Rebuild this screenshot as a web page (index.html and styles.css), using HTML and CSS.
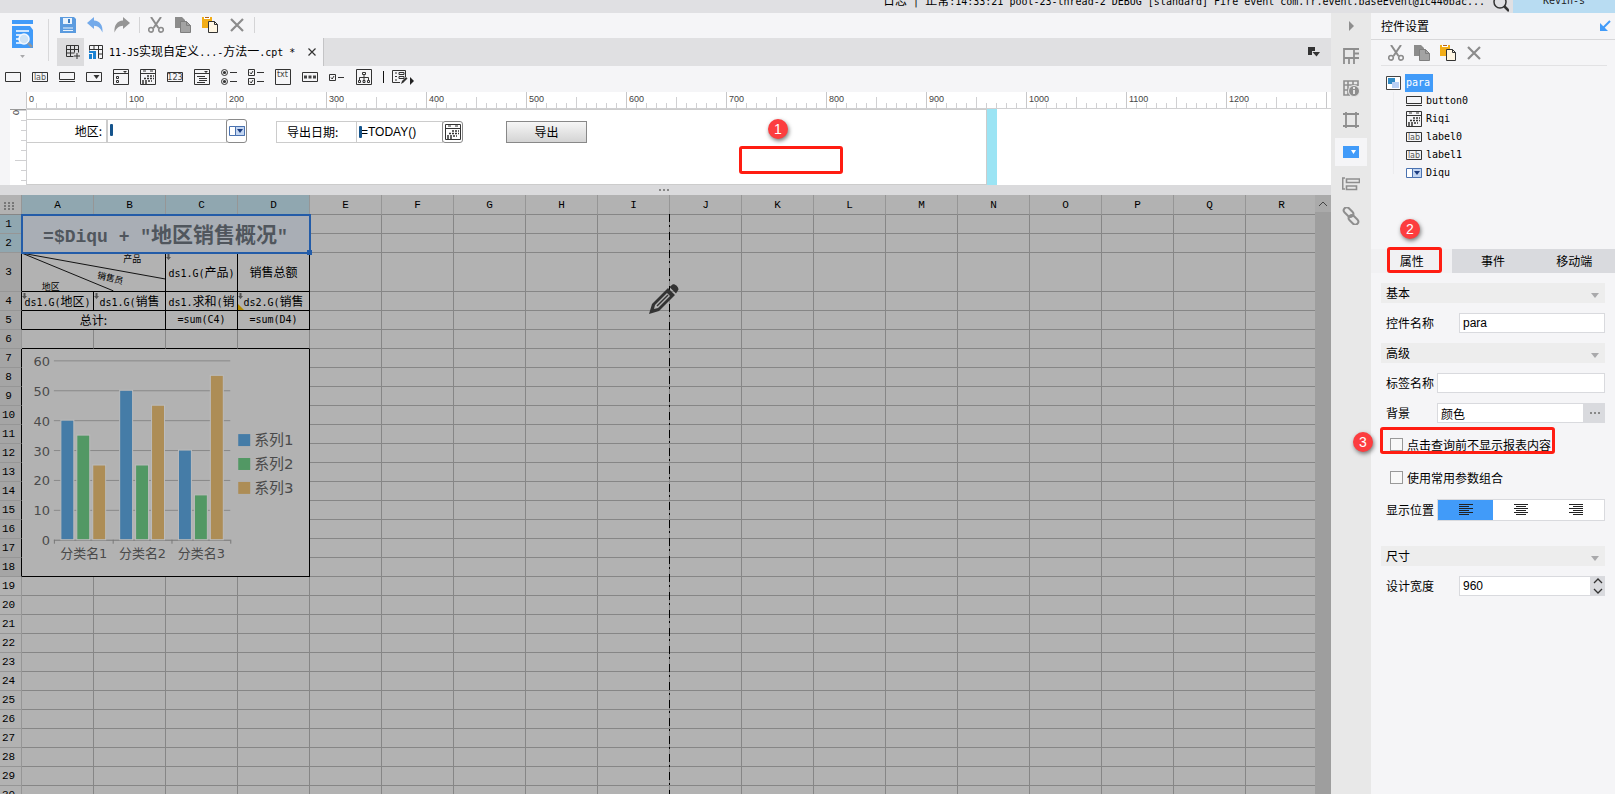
FILE: index.html
```html
<!DOCTYPE html>
<html lang="zh-CN">
<head>
	<meta charset="utf-8">
	<meta name="viewport" content="width=device-width, initial-scale=1">
	<title>Report Designer</title>
	<link rel="stylesheet" href="styles.css">
</head>
<body>
	<!-- shared icons -->
	<svg class="defs" aria-hidden="true">
		<symbol id="i-cut" viewBox="0 0 16 16"><g fill="none" stroke="#8c8c8c" stroke-width="2"><path d="M3 0l7.500 11M13 0L5.500 11"/><circle cx="3" cy="12.800" r="2.300" stroke-width="1.600"/><circle cx="13" cy="12.800" r="2.300" stroke-width="1.600"/></g></symbol>
		<symbol id="i-copy" viewBox="0 0 16 16"><path d="M0 0h7l3 3v8H0z" fill="#8c8c8c"/><path d="M5.500 4.500h6l4 4v7h-10z" fill="#a3a3a3" stroke="#7f7f7f"/><path d="M11.500 4.500v4h4" fill="none" stroke="#7f7f7f"/></symbol>
		<symbol id="i-paste" viewBox="0 0 16 16"><path d="M0 0h10v11H0z" fill="#f2ad17"/><path d="M2 0h6v2H2z" fill="#fff"/><path d="M3 0h4v1H3z" fill="#b5651d"/><path d="M6.500 4.500h6l3 3v8h-9z" fill="#fff6e3" stroke="#333"/><path d="M12.500 4.500v3h3" fill="none" stroke="#333"/></symbol>
		<symbol id="i-del" viewBox="0 0 16 16"><path d="M2 2l12 12M14 2L2 14" stroke="#8c8c8c" stroke-width="2.200"/></symbol>
		<symbol id="i-button" viewBox="0 0 16 16"><path d="M.5 3.500h15v7H.5zM0 12.500h16" fill="none" stroke="#333"/></symbol>
		<symbol id="i-label" viewBox="0 0 16 16"><path d="M.5 3.500h15v9H.5z" fill="none" stroke="#333"/><text x="8" y="11" font-size="8" text-anchor="middle" fill="#555" font-family="DejaVu Sans">lab</text></symbol>
		<symbol id="i-date" viewBox="0 0 16 16"><path d="M.5.5h15v15H.5zM.5 4.500h15" fill="none" stroke="#333"/><path d="M3 2h3M10 2h3" stroke="#333"/><path d="M7 7h7M4 9.500h10M2 12h10M2 14h5" stroke="#333" stroke-width="1.500" stroke-dasharray="2 1"/></symbol>
		<symbol id="i-combo" viewBox="0 0 16 16"><path d="M.5 3.500h15v9H.5z" fill="#fff" stroke="#4a72b0"/><path d="M6.500 3.500h9v9h-9z" fill="#c3d6f2" stroke="#4a72b0"/><path d="M8 6h6l-3 4z" fill="#1d3d80"/></symbol>
		<symbol id="i-caret" viewBox="0 0 8 5"><path d="M0 0h8L4 5z" fill="#a9a9ab"/></symbol>
	</svg>

	<header class="topbar">
		<p class="log">日志<span class="mono bar"> | </span>正常<span class="mono">:14:33:21 pool-23-thread-2 DEBUG [standard] Fire event com.fr.event.baseEvent@1c440bac...</span></p>
		<button class="icon-btn search" aria-label="搜索"><svg viewBox="0 0 16 16"><g fill="none" stroke="#333"><circle cx="7" cy="2" r="6" stroke-width="1.500"/><path d="M11 6l5 5" stroke-width="2.500"/></g></svg></button>
		<a class="user mono" href="#">Kevin-s</a>
	</header>

	<div class="workspace">
		<main class="designer">
			<div class="tools">
				<button class="preview" aria-label="预览">
					<svg class="preview-icon" viewBox="0 0 22 28"><path d="M0 0h21v4H0zM0 6h18l3 4v18H0V6z" fill="#419bf9"/><path d="M4 11h13M4 15h5M4 19h4M4 23h6" stroke="#fff" stroke-width="1.500"/><circle cx="12" cy="19" r="5" fill="#cfe3f5" stroke="#f3f8ff" stroke-width="1.500"/><path d="M16 23l4 4" stroke="#90979f" stroke-width="2.500"/></svg>
					<svg class="caret"><use href="#i-caret"/></svg>
				</button>
				<div class="bars">
					<div class="quickbar">
						<button class="icon-btn" aria-label="保存"><svg viewBox="0 0 16 16"><path d="M0 0h14l2 2v14H0z" fill="#5b9bdf"/><path d="M3 1h9v6H3z" fill="#eaf3fc"/><path d="M8 2h2v4H8z" fill="#3d7cc0"/><path d="M3 11h10M3 13.500h10" stroke="#eaf3fc" stroke-width="1.200"/></svg></button>
						<button class="icon-btn" aria-label="撤销"><svg viewBox="0 0 16 16"><path d="M0 6l7-6v3.500c6 .5 9 4.500 8.500 12C13.500 11 11 9 7 8.800V12z" fill="#74aaea"/></svg></button>
						<button class="icon-btn" aria-label="重做"><svg viewBox="0 0 16 16"><path d="M16 6L9 0v3.500C3 4 0 8 .5 15.500 2.500 11 5 9 9 8.800V12z" fill="#959595"/></svg></button>
						<span class="sep"></span>
						<button class="icon-btn" aria-label="剪切"><svg><use href="#i-cut"/></svg></button>
						<button class="icon-btn" aria-label="复制"><svg><use href="#i-copy"/></svg></button>
						<button class="icon-btn" aria-label="粘贴"><svg><use href="#i-paste"/></svg></button>
						<button class="icon-btn" aria-label="删除"><svg><use href="#i-del"/></svg></button>
						<span class="sep"></span>
					</div>
					<div class="tabs">
						<button class="new-tab" aria-label="新建"><svg viewBox="0 0 14 14"><path d="M.5.5h12v7M.5.5v11h7M.5 4.500h12M.5 8h8M4.500.5v11M8.500.5v7M11 8v6M8 11h6" fill="none" stroke="#333"/></svg></button>
						<div class="file-tab">
							<svg class="file-icon" viewBox="0 0 14 14"><path d="M.5.5h13v13h-3M.5.5v5M.5 4.500h13M5 .5v4M9.500.5v13M9.500 9h4" fill="none" stroke="#333"/><path d="M0 6h7v2H0zM0 9h3v5H0zM4 7h3v7H4z" fill="#1b82d2"/></svg>
							<span><span class="mono">11-JS</span>实现自定义<span class="mono">...-</span>方法一<span class="mono">.cpt *</span></span>
							<button class="tab-close" aria-label="关闭"><svg viewBox="0 0 8 8"><path d="M.5.5l7 7M7.500.5l-7 7" stroke="#333" stroke-width="1.200"/></svg></button>
						</div>
						<button class="tab-list" aria-label="文件列表"><svg viewBox="0 0 12 10"><path d="M0 0h7v4H4v4H0z" fill="#333"/><path d="M4.500 5H12L8.500 9.500z" fill="#333"/></svg></button>
					</div>
				</div>
			</div>

			<div class="widgets">
				<button class="icon-btn" aria-label="文本"><svg viewBox="0 0 16 16"><path d="M.5 3.500h15v9H.5z" fill="none" stroke="#333"/></svg></button>
				<button class="icon-btn" aria-label="标签"><svg><use href="#i-label"/></svg></button>
				<button class="icon-btn" aria-label="按钮"><svg><use href="#i-button"/></svg></button>
				<button class="icon-btn" aria-label="下拉框"><svg viewBox="0 0 16 16"><path d="M.5 3.500h15v9H.5z" fill="none" stroke="#333"/><path d="M7.500 6h6l-3 4z" fill="#333"/></svg></button>
				<button class="icon-btn" aria-label="下拉复选框"><svg viewBox="0 0 16 16"><path d="M.5.5h15v15H.5zM.5 4.500h15M3.500 7.500h2v2h-2zM3.500 11.500h2v2h-2z" fill="none" stroke="#333"/><path d="M10 2h4l-2 2z" fill="#333"/></svg></button>
				<button class="icon-btn" aria-label="日期"><svg><use href="#i-date"/></svg></button>
				<button class="icon-btn" aria-label="数字"><svg viewBox="0 0 16 16"><path d="M.5 3.500h15v9H.5z" fill="none" stroke="#333"/><text x="8" y="11" font-size="8" text-anchor="middle" fill="#444" font-family="DejaVu Sans">123</text></svg></button>
				<button class="icon-btn" aria-label="下拉树"><svg viewBox="0 0 16 16"><path d="M.5.5h15v15H.5zM.5 4.500h15M3 7.500h8M5 9.500h8M5 11.500h8M3 13.500h8" fill="none" stroke="#333"/><path d="M10 2h4l-2 2z" fill="#333"/></svg></button>
				<button class="icon-btn" aria-label="单选按钮组"><svg viewBox="0 0 16 16"><g fill="none" stroke="#333"><circle cx="3.500" cy="3.500" r="3"/><circle cx="3.500" cy="12.500" r="3"/><path d="M9 3.500h7M9 12.500h7"/></g><circle cx="3.500" cy="3.500" r="1.600" fill="#333"/><circle cx="3.500" cy="12.500" r="1.600" fill="#333"/></svg></button>
				<button class="icon-btn" aria-label="复选框组"><svg viewBox="0 0 16 16"><path d="M.5.5h6v6h-6zM.5 9.500h6v6h-6zM9 3.500h7M9 12.500h7M2 3.500l1.200 1.500L5 2M2 12.500L3.200 14 5 11" fill="none" stroke="#333"/></svg></button>
				<button class="icon-btn" aria-label="文本域"><svg viewBox="0 0 16 16"><path d="M.5.5h15v15H.5z" fill="none" stroke="#333"/><text x="7.500" y="7.500" font-size="8" text-anchor="middle" fill="#444" font-family="DejaVu Sans">txt</text></svg></button>
				<button class="icon-btn" aria-label="密码"><svg viewBox="0 0 16 16"><path d="M.5 3.500h15v9H.5z" fill="none" stroke="#333"/><path d="M2 8h12" stroke="#444" stroke-width="3" stroke-dasharray="3 1.500"/></svg></button>
				<button class="icon-btn" aria-label="复选框"><svg viewBox="0 0 16 16"><path d="M.5 5.500h6v6h-6zM9 8.500h6M2 8.500L3.200 10 5 7" fill="none" stroke="#333"/></svg></button>
				<button class="icon-btn" aria-label="视图树"><svg viewBox="0 0 16 16"><path d="M.5.5h15v15H.5zM6.500 3.500h3v2h-3zM8 6v5M3.500 11V8.500h9V11M2.500 11.500h2v2h-2zM7 11.500h2v2H7zM11.500 11.500h2v2h-2z" fill="none" stroke="#333"/></svg></button>
				<span class="widget-sep"></span>
				<button class="icon-btn more" aria-label="预定义控件"><svg viewBox="0 0 18 16"><path d="M8 13.500H.5V1.500h13V8M3 4h2M3 7.500h2M3 11h2M7 3.500h5v2H7zM7 7.500h5v2H7z" fill="none" stroke="#333"/><path d="M9 15l1-3 4-4 1.500 1.500-4 4z" fill="#333"/></svg><svg class="more-arrow" viewBox="0 0 4 8"><path d="M0 0l4 4-4 4z" fill="#222"/></svg></button>
			</div>

			<section class="form-area">
				<div class="ruler-h" id="rulerH"></div>
				<div class="ruler-v"><span>0</span></div>
				<div class="form-canvas">
					<div class="form-body">
						<label class="w-box w-label0" for="diqu">地区:</label>
						<div class="w-field w-diqu"><input id="diqu" type="text"><i class="cursor"></i></div>
						<button class="w-drop w-diqu-btn" aria-label="展开"><svg><use href="#i-combo"/></svg></button>
						<label class="w-box w-label1" for="riqi">导出日期:</label>
						<div class="w-field w-riqi"><input id="riqi" type="text" value="=TODAY()"><i class="cursor"></i></div>
						<button class="w-drop w-riqi-btn" aria-label="选择日期"><svg><use href="#i-date"/></svg></button>
						<button class="w-export">导出</button>
						<span class="badge badge-1">1</span>
						<span class="mark mark-1"></span>
					</div>
					<div class="form-edge"></div>
				</div>
			</section>

			<div class="splitter"><i></i><i></i><i></i></div>

			<section class="sheet">
				<div class="sheet-view">
					<table id="grid">
						<colgroup id="cols"><col class="col-head"></colgroup>
						<thead>
							<tr id="letters"><th class="corner"><svg viewBox="0 0 10 8"><path d="M0 1h10M0 4h10M0 7h10" stroke="#777" stroke-width="2" stroke-dasharray="2 2"/></svg></th></tr>
						</thead>
						<tbody id="rows">
							<tr><th class="on">1</th><td class="title-cell" colspan="4" rowspan="2"><div><span class="title-mono">=$Diqu + "</span>地区销售概况<span class="title-mono">"</span></div></td></tr>
							<tr><th class="on">2</th></tr>
							<tr class="tall"><th class="used edge">3</th>
								<td class="b diag" colspan="2"><svg viewBox="0 0 144 38"><path d="M0 0l144 26M0 0l92 38" stroke="#111" fill="none"/><text x="102" y="9">产品</text><text x="75" y="25" transform="rotate(14 75 25)">销售员</text><text x="20" y="37">地区</text></svg></td>
								<td class="b exp"><div><span class="mono">ds1.G(</span>产品<span class="mono">)</span></div></td>
								<td class="b"><div>销售总额</div></td>
							</tr>
							<tr><th class="used edge">4</th>
								<td class="b exp"><div><span class="mono">ds1.G(</span>地区<span class="mono">)</span></div></td>
								<td class="b exp"><div><span class="mono">ds1.G(</span>销售<br>员<span class="mono">)</span></div></td>
								<td class="b"><div><span class="mono">ds1.</span>求和<span class="mono">(</span>销<br>量<span class="mono">)</span></div></td>
								<td class="b exp warn"><div><span class="mono">ds2.G(</span>销售<br>总额<span class="mono">)</span></div></td>
							</tr>
							<tr><th class="used edge">5</th>
								<td class="b" colspan="2"><div>总计:</div></td>
								<td class="b"><div class="mono">=sum(C4)</div></td>
								<td class="b"><div class="mono">=sum(D4)</div></td>
							</tr>
							<tr class="gap"><th class="used">6</th><td></td><td></td><td></td><td></td></tr>
							<tr><th class="used edge">7</th><td class="b chart-cell" colspan="4" rowspan="12">
								<svg class="chart" id="chart" viewBox="0 0 288 227" role="img" aria-label="柱形图"></svg>
							</td></tr>
						</tbody>
					</table>
					<div class="selection"></div>
					<div class="page-break"></div>
					<svg class="pencil" viewBox="0 0 30 30"><path d="M0 30l3-10L19 4l7 7L10 27zM20.500 3l3-2.500c2-1 6 2 6 5L27 9.500z" fill="#333"/><path d="M6 21L18 9l3 3L9 24l-4 1z" fill="#b2b2b2"/><path d="M8 22L19 11" stroke="#333" stroke-width="1.500"/></svg>
				</div>
				<div class="scrollbar"><button aria-label="向上滚动"><svg viewBox="0 0 10 6"><path d="M1 5l4-4 4 4" fill="none" stroke="#444"/></svg></button></div>
			</section>
		</main>

		<nav class="rail">
			<button aria-label="收起"><svg viewBox="0 0 18 18"><path d="M7 4l5 5-5 5z" fill="#8e8e8e"/></svg></button>
			<button aria-label="单元格元素"><svg viewBox="0 0 18 18"><path d="M2 2h10v9H2zM2 1v16M12 2h5M12 6.500h5M12 11h5M7 11v6M12 11v6" fill="none" stroke="#8e8e8e" stroke-width="1.800"/></svg></button>
			<button aria-label="单元格属性"><svg viewBox="0 0 18 18"><path d="M8 16H2V2h14v5M2 6h14M2 11h6M6 2v14M11 2v4" fill="none" stroke="#8e8e8e" stroke-width="1.600"/><circle cx="12" cy="12" r="5.500" fill="#8e8e8e" stroke="#e8e8e8"/><path d="M12 11v4M12 8v2" stroke="#eee" stroke-width="1.800"/></svg></button>
			<button aria-label="悬浮元素"><svg viewBox="0 0 18 18"><path d="M4 1v16M14 1v16M1 3h16M1 15h16" stroke="#8e8e8e" stroke-width="1.800"/></svg></button>
			<button class="active" aria-label="控件设置"><svg viewBox="0 0 18 18"><path d="M1 3h16v12H1z" fill="#419bf9"/><path d="M9 7h5l-2.500 4z" fill="#fff"/></svg></button>
			<button aria-label="条件属性"><svg viewBox="0 0 18 18"><path d="M3 3H.7v11H3M4.500 4h13v3.500h-13zM4.500 11h10v3.500h-10z" fill="none" stroke="#8e8e8e" stroke-width="1.600"/></svg></button>
			<button aria-label="超级链接"><svg viewBox="0 0 18 18"><g fill="none" stroke="#8e8e8e" stroke-width="2" transform="rotate(45 9 9)"><rect x="-1" y="5" width="11" height="6" rx="3"/><rect x="8" y="7" width="11" height="6" rx="3"/></g></svg></button>
		</nav>

		<aside class="panel">
			<div class="panel-head"><h1>控件设置</h1><button class="icon-btn dock" aria-label="弹出"><svg viewBox="0 0 12 12"><path d="M11 1L4 8" stroke="#419bf9" stroke-width="2"/><path d="M1 3v8h8z" fill="#419bf9"/></svg></button></div>
			<div class="panel-tools">
				<button class="icon-btn" aria-label="剪切"><svg><use href="#i-cut"/></svg></button>
				<button class="icon-btn" aria-label="复制"><svg><use href="#i-copy"/></svg></button>
				<button class="icon-btn" aria-label="粘贴"><svg><use href="#i-paste"/></svg></button>
				<button class="icon-btn" aria-label="删除"><svg><use href="#i-del"/></svg></button>
			</div>
			<div class="tree mono">
				<div class="tree-root"><svg viewBox="0 0 16 16"><path d="M.5 1.500h14v13H.5z" fill="#fff" stroke="#444"/><path d="M2 3h7v6H2z" fill="#2f8ac4"/><path d="M6 7h7v6H6z" fill="#b9d0f5"/></svg><span>para</span></div>
				<ul>
					<li><svg><use href="#i-button"/></svg>button0</li>
					<li><svg><use href="#i-date"/></svg>Riqi</li>
					<li><svg><use href="#i-label"/></svg>label0</li>
					<li><svg><use href="#i-label"/></svg>label1</li>
					<li><svg><use href="#i-combo"/></svg>Diqu</li>
				</ul>
				<span class="badge badge-2">2</span>
			</div>
			<div class="panel-tabs">
				<button class="active">属性</button>
				<button>事件</button>
				<button>移动端</button>
				<span class="mark mark-2"></span>
			</div>
			<form class="props">
				<h2>基本<svg class="caret"><use href="#i-caret"/></svg></h2>
				<div class="row"><label class="wide" for="pName">控件名称</label><input id="pName" type="text" value="para"></div>
				<h2>高级<svg class="caret"><use href="#i-caret"/></svg></h2>
				<div class="row"><label for="pTag">标签名称</label><input id="pTag" type="text"></div>
				<div class="row"><label for="pBg">背景</label><input id="pBg" class="cjk" type="text" value="颜色"><button type="button" class="dots" aria-label="选择背景"><i></i><i></i><i></i></button></div>
				<div class="row check"><input id="pHide" type="checkbox"><label for="pHide">点击查询前不显示报表内容</label><span class="badge badge-3">3</span><span class="mark mark-3"></span></div>
				<div class="row check"><input id="pUse" type="checkbox"><label for="pUse">使用常用参数组合</label></div>
				<div class="row last"><label>显示位置</label>
					<div class="segment">
						<button type="button" class="active" aria-label="左"><svg viewBox="0 0 14 12"><path d="M0 .5h14M0 2.500h10M0 4.500h14M0 6.500h10M0 8.500h14M0 10.500h10" stroke="#222"/></svg></button>
						<button type="button" aria-label="中"><svg viewBox="0 0 14 12"><path d="M0 .5h14M2 2.500h10M0 4.500h14M2 6.500h10M0 8.500h14M2 10.500h10" stroke="#222"/></svg></button>
						<button type="button" aria-label="右"><svg viewBox="0 0 14 12"><path d="M0 .5h14M4 2.500h10M0 4.500h14M4 6.500h10M0 8.500h14M4 10.500h10" stroke="#222"/></svg></button>
					</div>
				</div>
				<h2>尺寸<svg class="caret"><use href="#i-caret"/></svg></h2>
				<div class="row"><label class="wide" for="pWidth">设计宽度</label><input id="pWidth" type="text" value="960">
					<div class="spin">
						<button type="button" aria-label="增加"><svg viewBox="0 0 10 6"><path d="M1 5l4-4 4 4" fill="none" stroke="#333" stroke-width="1.300"/></svg></button>
						<button type="button" aria-label="减少"><svg viewBox="0 0 10 6"><path d="M1 1l4 4 4-4" fill="none" stroke="#333" stroke-width="1.300"/></svg></button>
					</div>
				</div>
			</form>
		</aside>
	</div>

	<script>
		const COLS = 18;
		const ROWS = 30;

		// ruler numbers, one every 100 units
		const ruler = document.getElementById('rulerH');
		for (let n = 0; n <= 1200; n += 100) {
			ruler.insertAdjacentHTML('beforeend', `<span>${n}</span>`);
		}

		// column letters
		const cols = document.getElementById('cols');
		const letters = document.getElementById('letters');
		for (let c = 0; c < COLS; c++) {
			cols.insertAdjacentHTML('beforeend', '<col class="col">');
			letters.insertAdjacentHTML('beforeend', `<th class="${c < 4 ? 'on' : ''}">${String.fromCharCode(65 + c)}</th>`);
		}

		// fill the rest of the grid with empty cells
		const tbody = document.getElementById('rows');
		for (let r = 1; r <= ROWS; r++) {
			let row = tbody.rows[r - 1];
			if (!row) {
				row = tbody.insertRow(-1);
				row.innerHTML = `<th class="${r <= 18 ? 'used edge' : ''}">${r}</th>`;
			}
			const empty = r <= 18 ? COLS - 4 : COLS;
			for (let c = 0; c < empty; c++) {
				row.insertCell(-1);
			}
		}

		// bar chart
		const series = [
			{ name: '系列1', color: '#457ca7', data: [40, 50, 30] },
			{ name: '系列2', color: '#529864', data: [35, 25, 15] },
			{ name: '系列3', color: '#ad8d56', data: [25, 45, 55] }
		];
		const left = 32, right = 209, bottom = 191, step = 59;
		let out = '';
		for (let v = 0; v <= 60; v += 10) {
			const y = bottom - v * 3 + 0.5;
			out += `<path d="M${left} ${y}H${right}" stroke="${v ? '#8a8a8a' : '#777'}"/>`;
			out += `<text x="28" y="${y + 5}" text-anchor="end">${v}</text>`;
		}
		for (let c = 0; c < 3; c++) {
			const x = left + c * step;
			series.forEach((s, i) => {
				const h = s.data[c] * 3;
				out += `<rect x="${x + 7 + i * 16}" y="${bottom - h}" width="13" height="${h}" fill="${s.color}" stroke="#bcbcbc"/>`;
			});
			out += `<text x="${x + 30}" y="209" text-anchor="middle">分类名${c + 1}</text>`;
		}
		for (let c = 0; c <= 3; c++) {
			out += `<path d="M${left + c * step + 0.5} ${bottom}v4" stroke="#777"/>`;
		}
		series.forEach((s, i) => {
			const y = 85 + i * 24;
			out += `<rect x="217" y="${y}" width="12" height="12" fill="${s.color}"/>`;
			out += `<text class="legend" x="233" y="${y + 11}">${s.name}</text>`;
		});
		document.getElementById('chart').innerHTML = out;
	</script>
</body>
</html>
```

FILE: styles.css
```css
* {
    box-sizing: border-box;
}
body {
    margin: 0;
    height: 100vh;
    display: flex;
    flex-direction: column;
    overflow: hidden;
    background: #f5f5f7;
    color: #000;
    font-family: "Noto Sans CJK SC", sans-serif;
    font-size: 12px;
    line-height: 16px;
}
button, input {
    font: inherit;
    color: inherit;
    margin: 0;
    padding: 0;
    border: 0;
    background: none;
}
svg {
    display: block;
}
.defs {
    display: none;
}
.mono {
    font-family: "DejaVu Sans Mono", "Liberation Mono", monospace;
    font-size: 10px;
}
.icon-btn {
    flex: none;
    width: 16px;
    height: 16px;
}
.icon-btn svg {
    width: 16px;
    height: 16px;
}
.caret {
    width: 8px;
    height: 5px;
}

/* top bar */
.topbar {
    flex: none;
    display: flex;
    justify-content: flex-end;
    align-items: flex-end;
    height: 13px;
    overflow: hidden;
    background: #e0e0e3;
}
.log {
    margin: 0;
    padding-bottom: 3px;
    white-space: nowrap;
}
.bar {
    white-space: pre;
}
.search {
    margin: 0 4px 0 8px;
    height: 13px;
}
.user {
    width: 102px;
    height: 20px;
    padding-bottom: 4px;
    background: #b8dcf2;
    color: #222;
    text-align: center;
    text-decoration: none;
}

.workspace {
    flex: 1;
    display: flex;
    min-height: 0;
}
.designer {
    flex: 1;
    display: flex;
    flex-direction: column;
    min-width: 0;
}

/* toolbars */
.tools {
    flex: none;
    display: flex;
    height: 53px;
}
.preview {
    display: flex;
    flex-direction: column;
    align-items: center;
    justify-content: flex-start;
    gap: 7px;
    width: 37px;
    height: 42px;
    margin: 6px 0 0 12px;
    padding: 1px 15px 0 0;
    border-right: 1px solid #d8d8da;
}
.preview-icon {
    width: 22px;
    height: 28px;
}
.preview .caret {
    width: 5px;
    height: 3px;
}
.bars {
    flex: 1;
    min-width: 0;
    margin-left: 8px;
}
.quickbar {
    display: flex;
    align-items: center;
    gap: 11px;
    height: 25px;
    padding: 0 0 2px 3px;
}
.sep {
    width: 1px;
    height: 16px;
    background: #d4d4d6;
    margin: 0 -3px 0 -2px;
}
.tabs {
    display: flex;
    height: 28px;
    background: #e0e0e2;
}
.new-tab {
    width: 27px;
    padding-left: 9px;
    background: #dcdcde;
}
.new-tab svg, .file-icon {
    width: 14px;
    height: 14px;
}
.file-tab {
    display: flex;
    align-items: center;
    width: 240px;
    padding: 0 7px 0 5px;
    gap: 6px;
    background: #f5f5f7;
    border-right: 1px solid #c4c4c6;
    white-space: nowrap;
}
.tab-close {
    margin-left: auto;
}
.tab-close svg {
    width: 8px;
    height: 8px;
}
.tab-list {
    margin: 0 11px 0 auto;
}
.tab-list svg {
    width: 12px;
    height: 10px;
}
.widgets {
    flex: none;
    display: flex;
    align-items: center;
    gap: 11px;
    height: 26px;
    padding: 0 0 4px 5px;
}
.widget-sep {
    width: 1px;
    height: 12px;
    background: #111;
}
.more {
    display: flex;
    align-items: flex-end;
    width: 24px;
    margin-left: -3px;
}
.more svg {
    flex: none;
    width: 18px;
}
.more .more-arrow {
    width: 4px;
    height: 8px;
}

/* parameter form */
.form-area {
    flex: none;
    display: grid;
    grid-template-columns: 26px 1fr;
    grid-template-rows: 17px 76px;
}
.ruler-h {
    grid-column: 2;
    display: flex;
    overflow: hidden;
    border-bottom: 1px solid #d0d0d2;
    background:
        repeating-linear-gradient(90deg, #c8c8ca 0 1px, transparent 1px 100px) 0 0 / 100% 16px no-repeat,
        repeating-linear-gradient(90deg, #d0d0d2 0 1px, transparent 1px 50px) 0 100% / 100% 11px no-repeat,
        repeating-linear-gradient(90deg, #d0d0d2 0 1px, transparent 1px 10px) 0 100% / 100% 5px no-repeat,
        #fff;
}
.ruler-h span {
    flex: none;
    width: 100px;
    padding-left: 3px;
    color: #444;
    font: 9px/14px "Liberation Sans", sans-serif;
}
.ruler-v {
    margin-left: 10px;
    padding: 0 0 0 1px;
    border-top: 1px solid #999;
    background:
        repeating-linear-gradient(#d0d0d2 0 1px, transparent 1px 50px) 100% 0 / 11px 100% no-repeat,
        repeating-linear-gradient(#d0d0d2 0 1px, transparent 1px 10px) 100% 0 / 5px 100% no-repeat,
        #fff;
}
.ruler-v span {
    display: block;
    writing-mode: vertical-rl;
    color: #444;
    font: 9px/10px "Liberation Sans", sans-serif;
}
.form-canvas {
    display: flex;
    background: #fff;
    border-left: 1px solid #d0d0d2;
}
.form-body {
    position: relative;
    width: 960px;
    border: solid #ccc;
    border-width: 1px 1px 1px 0;
}
.form-edge {
    width: 10px;
    background: #9be4f4;
}
/* widgets sit freely on the canvas */
.w-box, .w-field, .w-drop, .w-export {
    position: absolute;
    border: 1px solid #ccc;
}
.w-box {
    line-height: 20px;
    white-space: nowrap;
}
.w-field input {
    display: block;
    width: 100%;
    height: 100%;
    padding-left: 4px;
    font-family: "Liberation Sans", sans-serif;
    outline: 0;
}
.cursor {
    position: absolute;
    left: 2px;
    top: 4px;
    width: 3px;
    height: 12px;
    border-radius: 1px;
    background: #15548c;
}
.w-drop {
    width: 21px;
    border-color: #8a8a8a;
    border-radius: 3px;
    background: #fff;
}
.w-drop svg {
    width: 16px;
    height: 16px;
    margin: auto;
}
.w-label0 { left: 0; top: 9px; width: 80px; height: 24px; padding: 1px 4px 0 0; border-left: 0; text-align: right; }
.w-diqu { left: 80px; top: 9px; width: 120px; height: 24px; }
.w-diqu-btn { left: 199px; top: 9px; height: 24px; }
.w-label1 { left: 249px; top: 11px; width: 81px; height: 22px; padding-left: 10px; }
.w-riqi { left: 329px; top: 11px; width: 87px; height: 22px; }
.w-riqi-btn { left: 415px; top: 11px; height: 22px; }
.w-export {
    left: 479px;
    top: 11px;
    width: 81px;
    height: 22px;
    border-color: #888;
    background: linear-gradient(#f6f6f6, #d4d4d4);
}

/* callouts */
.badge {
    position: absolute;
    z-index: 2;
    width: 20px;
    height: 20px;
    border-radius: 50%;
    background: #fc3d3f;
    box-shadow: 1px 2px 4px #777;
    color: #fff;
    font: 14px/20px "Liberation Sans", sans-serif;
    text-align: center;
}
.mark {
    position: absolute;
    border: 3px solid #ff1d12;
    border-radius: 3px;
    pointer-events: none;
}
.badge-1 { left: 741px; top: 9px; }
.mark-1 { left: 712px; top: 36px; width: 104px; height: 28px; }
.badge-2 { left: 29px; bottom: 10px; }
.mark-2 { left: 16px; top: -2px; width: 55px; height: 26px; }
.badge-3 { left: -28px; top: -1px; }
.mark-3 { left: -1px; top: -6px; width: 175px; height: 27px; }

.splitter {
    flex: none;
    display: flex;
    justify-content: center;
    align-items: center;
    gap: 2px;
    height: 10px;
    padding-right: 4px;
    background: #dadadc;
}
.splitter i {
    width: 2px;
    height: 2px;
    background: #888;
}

/* sheet */
.sheet {
    flex: 1;
    display: flex;
    min-height: 0;
    background: #b2b2b2;
}
.sheet-view {
    flex: 1;
    position: relative;
    min-width: 0;
    overflow: hidden;
}
#grid {
    width: 100%;
    table-layout: fixed;
    border-collapse: separate;
    border-spacing: 0;
}
.col-head {
    width: 22px;
}
.col {
    width: 72px;
}
#grid th, #grid td {
    height: 19px;
    padding: 0;
    border: solid #868686;
    border-width: 0 1px 1px 0;
    line-height: 18px;
    text-align: center;
}
#grid th {
    border-color: #969696;
    font: 11px/18px "Liberation Mono", monospace;
}
#grid thead th {
    height: 20px;
    padding-top: 2px;
    border-bottom-color: #868686;
    line-height: 17px;
}
#grid th.used {
    background: #a5a5a5;
}
#grid th.edge {
    border-right-color: #000;
}
#grid th.on {
    background: #90a7b0;
}
#grid tbody th, #grid .corner {
    padding-right: 4px;
}
.corner svg {
    width: 10px;
    height: 8px;
    margin: auto;
}
#grid .tall td, #grid .tall th {
    height: 39px;
}
#grid td.b {
    border-color: #000;
    position: relative;
}
#grid .gap td:nth-child(-n+5) {
    border-bottom-color: #000;
}
#grid td.b > div {
    height: 18px;
    overflow: hidden;
}
#grid .title-cell {
    background: #a9aeb5;
    color: #50565d;
    font-size: 21px;
    font-weight: bold;
    white-space: nowrap;
}
.title-cell div {
    height: 37px;
    line-height: 37px;
    overflow: hidden;
}
.title-mono {
    font-family: "Liberation Mono", monospace;
    font-size: 18px;
}
.diag svg {
    width: 100%;
    height: 38px;
}
.diag text {
    font-size: 9px;
}
.exp::before {
    content: "";
    position: absolute;
    left: 0;
    top: 1px;
    width: 5px;
    height: 6px;
    background: #555;
    clip-path: polygon(30% 0, 70% 0, 70% 50%, 100% 50%, 50% 100%, 0 50%, 30% 50%);
}
.warn::after {
    content: "";
    position: absolute;
    left: 0;
    bottom: 0;
    border: solid transparent;
    border-width: 6px 0 0 6px;
    border-left-color: #b58a00;
}
.chart {
    width: 100%;
    height: 227px;
}
.chart text {
    fill: #4a4a4a;
    font: 13px "DejaVu Sans", "Noto Sans CJK SC", sans-serif;
}
.chart .legend {
    font-size: 15px;
}
.selection {
    position: absolute;
    left: 21px;
    top: 19px;
    width: 290px;
    height: 40px;
    border: 2px solid #235ca8;
}
.selection::after {
    content: "";
    position: absolute;
    right: -3px;
    bottom: -3px;
    width: 5px;
    height: 5px;
    background: #235ca8;
}
.page-break {
    position: absolute;
    left: 669px;
    top: 19px;
    bottom: 0;
    width: 1px;
    background: repeating-linear-gradient(#000 0 8px, transparent 8px 11px, #000 11px 13px, transparent 13px 18px);
}
.pencil {
    position: absolute;
    left: 649px;
    top: 89px;
    width: 30px;
    height: 30px;
}
.scrollbar {
    width: 16px;
    background: #9e9e9e;
}
.scrollbar button {
    display: block;
    width: 100%;
    height: 17px;
    background: #aaa;
}
.scrollbar svg {
    width: 10px;
    height: 6px;
    margin: auto;
}

/* icon rail */
.rail {
    flex: none;
    display: flex;
    flex-direction: column;
    align-items: center;
    gap: 4px;
    width: 40px;
    background: #e8e8e8;
}
.rail button {
    width: 32px;
    height: 28px;
}
.rail button:first-child {
    height: 25px;
}
.rail .active {
    background: #f5f5f7;
}
.rail svg {
    width: 18px;
    height: 18px;
    margin: auto;
}

/* right panel */
.panel {
    flex: none;
    width: 244px;
}
.panel-head {
    display: flex;
    justify-content: space-between;
    align-items: center;
    height: 27px;
    padding: 0 4px 0 10px;
    border-bottom: 1px solid #d8d8da;
}
.panel-head h1 {
    margin: 0;
    font-size: 12px;
    font-weight: normal;
}
.dock, .dock svg {
    width: 12px;
    height: 12px;
}
.panel-tools {
    display: flex;
    align-items: center;
    gap: 10px;
    height: 26px;
    margin: 0 8px 0 10px;
    padding-left: 7px;
    border-bottom: 1px solid #e2e2e4;
}
.tree {
    position: relative;
    height: 183px;
    padding: 8px 0 0 15px;
}
.tree svg {
    flex: none;
    width: 16px;
    height: 16px;
}
.tree-root {
    display: flex;
    align-items: center;
    gap: 3px;
}
.tree-root span {
    padding: 1px 3px 1px 1px;
    background: #419bf9;
    color: #fff;
}
.tree ul {
    list-style: none;
    margin: 0 0 0 7px;
    padding: 0;
    border-left: 1px solid #ececee;
    height: 82px;
}
.tree li {
    display: flex;
    align-items: center;
    gap: 4px;
    height: 18px;
    padding-left: 12px;
}
.panel-tabs {
    position: relative;
    display: flex;
    height: 24px;
    background: #d9dade;
}
.panel-tabs button {
    flex: 1;
}
.panel-tabs .active {
    background: #f1f1f3;
}
.props {
    display: flex;
    flex-direction: column;
    gap: 10px;
    padding: 10px 10px 0;
}
.props h2 {
    display: flex;
    justify-content: space-between;
    align-items: center;
    height: 20px;
    margin: 0;
    padding: 0 6px 0 5px;
    background: #ededed;
    font-size: 12px;
    font-weight: normal;
    line-height: 18px;
}
.props h2 .caret {
    margin-top: 4px;
}
.row {
    display: flex;
    align-items: center;
    height: 20px;
    padding-left: 5px;
}
.row > label {
    flex: none;
    width: 51px;
}
.row > .wide {
    width: 73px;
}
.row input[type="text"] {
    flex: 1;
    min-width: 0;
    height: 20px;
    padding: 0 3px;
    border: 1px solid #d9dade;
    background: #fff;
    font-family: "Liberation Sans", sans-serif;
}
.row input.cjk {
    font-family: "Noto Sans CJK SC", sans-serif;
}
.dots {
    display: flex;
    justify-content: center;
    align-items: center;
    gap: 2px;
    width: 21px;
    height: 20px;
    background: #d9dade;
}
.dots i {
    width: 2px;
    height: 2px;
    background: #888;
}
.check {
    position: relative;
    gap: 4px;
    height: 23px;
    padding-left: 9px;
}
.check > label {
    width: auto;
}
.check input {
    appearance: none;
    width: 13px;
    height: 13px;
    border: 1px solid #999;
    background: #f8f8f8;
}
.last {
    height: 22px;
    margin-bottom: 15px;
}
.segment {
    flex: 1;
    display: flex;
    height: 22px;
    border: 1px solid #d9dade;
    background: #fff;
}
.segment button {
    flex: 1;
}
.segment .active {
    background: #419bf9;
}
.segment svg {
    width: 14px;
    height: 12px;
    margin: auto;
}
.spin {
    display: flex;
    flex-direction: column;
    width: 14px;
    height: 20px;
    background: #d9dade;
}
.spin button {
    flex: 1;
}
.spin svg {
    width: 10px;
    height: 6px;
    margin: auto;
}
```
